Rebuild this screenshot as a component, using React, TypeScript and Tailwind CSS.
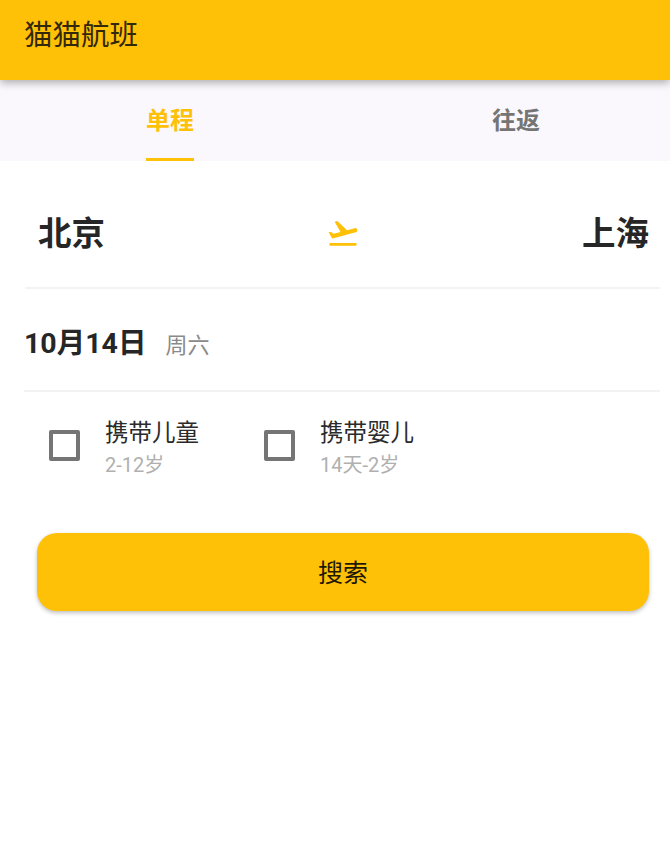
import React from 'react'

const FONT = "font-['Roboto','Noto_Sans_CJK_SC',sans-serif]"

const FlightTakeoff = () => (
  <svg width="34" height="34" viewBox="0 0 24 24" fill="#ffc107" className="mt-[-3px] ml-[-1px]">
    <path d="M2.5 19h19v2h-19v-2zm19.57-9.36c-.21-.8-1.04-1.28-1.84-1.06L14.92 10l-6.9-6.43-1.93.51 4.14 7.17-4.97 1.33-1.97-1.54-1.45.39 1.82 3.16.77 1.33 1.6-.43 5.31-1.42 4.35-1.16L21 11.49c.81-.23 1.28-1.05 1.07-1.85z" />
  </svg>
)

const Check: React.FC<{ title: string; sub: string; className: string }> = ({ title, sub, className }) => (
  <div className={`flex items-center ${className}`}>
    <div className="w-[31px] h-[31px] border-[4px] border-[#757575] rounded-[2px] shrink-0 mt-[-4px]" />
    <div className="ml-[25px] flex flex-col">
      <span className="text-[23.5px] leading-[32px] text-[#2b2b2b]">{title}</span>
      <span className="text-[20px] leading-[26px] text-[#b0b0b0] mt-[3px]">{sub}</span>
    </div>
  </div>
)

export default function App() {
  return (
    <div className={`w-[670px] h-[856px] bg-white overflow-hidden flex flex-col ${FONT}`}>
      <header className="h-[80px] shrink-0 bg-[#ffc107] pl-[24px] pt-[18px] shadow-[0_3px_8px_rgba(0,0,0,0.3)] relative z-10">
        <h1 className="text-[28.5px] leading-[36px] text-[#33280a]">猫猫航班</h1>
      </header>

      <div className="h-[81px] shrink-0 bg-[#faf8fc] grid grid-cols-[340px_1fr]">
        <div className="flex justify-center">
          <div className="w-[48px] h-full flex flex-col items-center border-b-[3px] border-[#ffc107]">
            <span className="mt-[25px] text-[24px] leading-[32px] font-bold text-[#ffc107] whitespace-nowrap">单程</span>
          </div>
        </div>
        <div className="flex justify-center pl-[22px]">
          <span className="mt-[25px] text-[24px] leading-[32px] font-bold text-[#757575]">往返</span>
        </div>
      </div>

      <div className="mx-[25px] mr-[10px] h-[128px] shrink-0 border-b-[2px] border-[#f3f3f3] flex items-center justify-between pl-[13px] pr-[11px] pt-[20px]">
        <span className="text-[33.5px] leading-[40px] font-bold text-[#262626]">北京</span>
        <FlightTakeoff />
        <span className="text-[33.5px] leading-[40px] font-bold text-[#262626]">上海</span>
      </div>

      <div className="ml-[24px] mr-[10px] h-[103px] shrink-0 border-b-[2px] border-[#f3f3f3] flex items-center pt-[8px]">
        <span className="text-[28.5px] leading-[36px] font-bold text-[#262626]">10月14日</span>
        <span className="ml-[19px] mt-[5px] text-[22px] leading-[30px] text-[#8a8a8a]">周六</span>
      </div>

      <div className="flex pt-[25px] pl-[49px]">
        <Check title="携带儿童" sub="2-12岁" className="w-[215px]" />
        <Check title="携带婴儿" sub="14天-2岁" className="" />
      </div>

      <button className="mt-[55px] ml-[37px] w-[612px] h-[78px] shrink-0 rounded-[20px] bg-[#ffc107] pt-[3px] text-[25px] text-[#1f1805] shadow-[0_2px_4px_rgba(0,0,0,0.25)]">
        搜索
      </button>
    </div>
  )
}
